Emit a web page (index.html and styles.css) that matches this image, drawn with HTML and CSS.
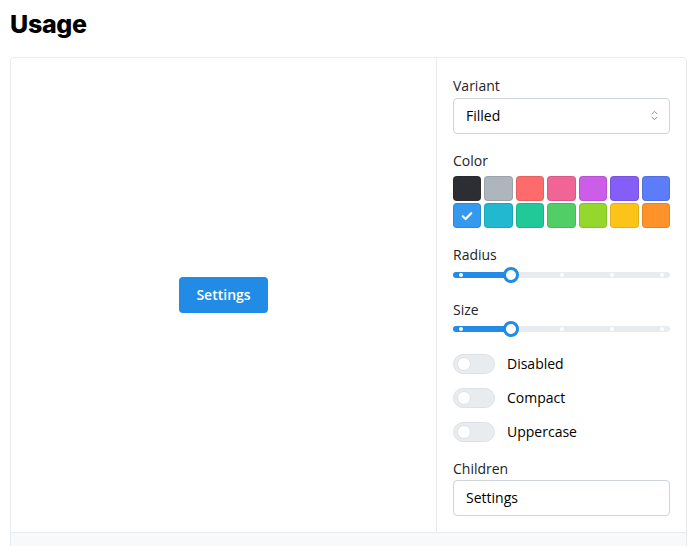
FILE: index.html
```html
<!DOCTYPE html>
<html>
<head>
<meta charset="utf-8">
<link rel="stylesheet" href="styles.css">
</head>
<body>
<div class="page">
  <h2 class="title">Usage</h2>
  <div class="card">
    <div class="main">
      <div class="preview">
        <button class="btn">Settings</button>
      </div>
      <div class="controls">
        <div class="field">
          <div class="label">Variant</div>
          <div class="input select">
            <span>Filled</span>
            <svg class="chev" width="15" height="15" viewBox="0 0 15 15"><path d="M5 5.8 7.5 3.3 10 5.8M5 9.2 7.5 11.7 10 9.2" fill="none" stroke="#868e96" stroke-width="1" stroke-linecap="round" stroke-linejoin="round"/></svg>
          </div>
        </div>
        <div class="field">
          <div class="label">Color</div>
          <div class="swatches">
            <div class="sw" style="background:#2c2e33"></div>
            <div class="sw" style="background:#adb5bd"></div>
            <div class="sw" style="background:#ff6b6b"></div>
            <div class="sw" style="background:#f06595"></div>
            <div class="sw" style="background:#cc5de8"></div>
            <div class="sw" style="background:#845ef7"></div>
            <div class="sw" style="background:#5c7cfa"></div>
            <div class="sw sel" style="background:#339af0"><svg width="14" height="14" viewBox="0 0 14 14"><path d="M2.8 7.3 5.6 10 11.2 4.2" fill="none" stroke="#fff" stroke-width="2.2" stroke-linecap="round" stroke-linejoin="round"/></svg></div>
            <div class="sw" style="background:#22b8cf"></div>
            <div class="sw" style="background:#20c997"></div>
            <div class="sw" style="background:#51cf66"></div>
            <div class="sw" style="background:#94d82d"></div>
            <div class="sw" style="background:#fcc419"></div>
            <div class="sw" style="background:#ff922b"></div>
          </div>
        </div>
        <div class="field">
          <div class="label">Radius</div>
          <div class="slider">
            <div class="track">
              <div class="fill" style="width:calc(8px + 25% - 4px)"></div>
              <div class="rail">
                <span class="mark" style="left:0%"></span>
                <span class="mark" style="left:25%"></span>
                <span class="mark" style="left:50%"></span>
                <span class="mark" style="left:75%"></span>
                <span class="mark" style="left:100%"></span>
                <span class="thumb" style="left:25%"></span>
              </div>
            </div>
          </div>
        </div>
        <div class="field">
          <div class="label">Size</div>
          <div class="slider">
            <div class="track">
              <div class="fill" style="width:calc(8px + 25% - 4px)"></div>
              <div class="rail">
                <span class="mark" style="left:0%"></span>
                <span class="mark" style="left:25%"></span>
                <span class="mark" style="left:50%"></span>
                <span class="mark" style="left:75%"></span>
                <span class="mark" style="left:100%"></span>
                <span class="thumb" style="left:25%"></span>
              </div>
            </div>
          </div>
        </div>
        <div class="switches">
          <div class="switch-row"><span class="switch"><span class="knob"></span></span><span>Disabled</span></div>
          <div class="switch-row"><span class="switch"><span class="knob"></span></span><span>Compact</span></div>
          <div class="switch-row"><span class="switch"><span class="knob"></span></span><span>Uppercase</span></div>
        </div>
        <div class="field">
          <div class="label">Children</div>
          <div class="input"><span>Settings</span></div>
        </div>
      </div>
    </div>
    <div class="code"></div>
  </div>
</div>
</body>
</html>
```
FILE: styles.css
```css
* { box-sizing: border-box; }
html, body { margin: 0; padding: 0; background: #fff; }
body {
  font-family: "Open Sans", "Noto Sans", sans-serif;
  font-size: 14px;
  color: #000;
  overflow: hidden;
}
.page { padding: 0 8px 0 10px; }
.title {
  font-family: Inter, "Liberation Sans", sans-serif;
  font-weight: 800;
  font-size: 25px;
  line-height: 36px;
  margin: 6px 0 15px 0;
  color: #000;
  letter-spacing: -0.3px;
}
.card {
  border: 1px solid #e9ecef;
  border-radius: 4px;
  overflow: hidden;
}
.main {
  display: grid;
  grid-template-columns: 1fr 250px;
}
.preview {
  display: flex;
  align-items: center;
  justify-content: center;
}
.btn {
  font-family: "Open Sans", sans-serif;
  font-size: 14px;
  font-weight: 600;
  height: 36px;
  padding: 0 17px;
  border: 0;
  border-radius: 4px;
  background: #228be6;
  color: #fff;
}
.controls {
  border-left: 1px solid #e9ecef;
  padding: 17px 16px 16px;
  display: flex;
  flex-direction: column;
  gap: 16px;
}
.label {
  line-height: 21.7px;
  color: #212529;
}
.input {
  height: 36px;
  border: 1px solid #ced4da;
  border-radius: 4px;
  padding: 0 12px;
  display: flex;
  align-items: center;
  justify-content: space-between;
  color: #000;
}
.select { margin-top: 1px; }
.chev { margin-right: -5px; }
.swatches {
  margin-top: 5px;
  display: grid;
  grid-template-columns: repeat(7, 1fr);
  gap: 2px 3px;
}
.sw {
  height: 25px;
  border-radius: 4px;
  box-shadow: inset 0 0 0 1px rgba(0,0,0,0.1);
  display: flex;
  align-items: center;
  justify-content: center;
}
.slider {
  height: 17px;
  display: flex;
  align-items: center;
}
.track {
  position: relative;
  width: 100%;
  height: 6px;
  border-radius: 3px;
  background: #e9ecef;
}
.fill {
  position: absolute;
  left: 0; top: 0; bottom: 0;
  background: #228be6;
  border-radius: 3px;
}
.rail {
  position: absolute;
  left: 8px;
  right: 8px;
  top: 0;
  bottom: 0;
}
.mark {
  position: absolute;
  top: 1px;
  width: 4px;
  height: 4px;
  border-radius: 50%;
  background: #fff;
  margin-left: -2px;
}
.thumb {
  position: absolute;
  top: -5px;
  width: 16px;
  height: 16px;
  margin-left: -8px;
  border-radius: 50%;
  background: #fff;
  border: 3px solid #228be6;
}
.switches {
  display: flex;
  flex-direction: column;
  gap: 14px;
}
.switch-row {
  display: flex;
  align-items: center;
  gap: 12px;
  height: 20px;
  color: #000;
}
.switch {
  width: 42px;
  height: 20px;
  border-radius: 10px;
  background: #e9ecef;
  border: 1px solid #dee2e6;
  display: flex;
  align-items: center;
  padding-left: 3px;
}
.knob {
  width: 14px;
  height: 14px;
  border-radius: 50%;
  background: #fff;
  border: 1px solid #dee2e6;
}
.code {
  border-top: 1px solid #e9ecef;
  background: #f8f9fa;
  height: 60px;
}
```
